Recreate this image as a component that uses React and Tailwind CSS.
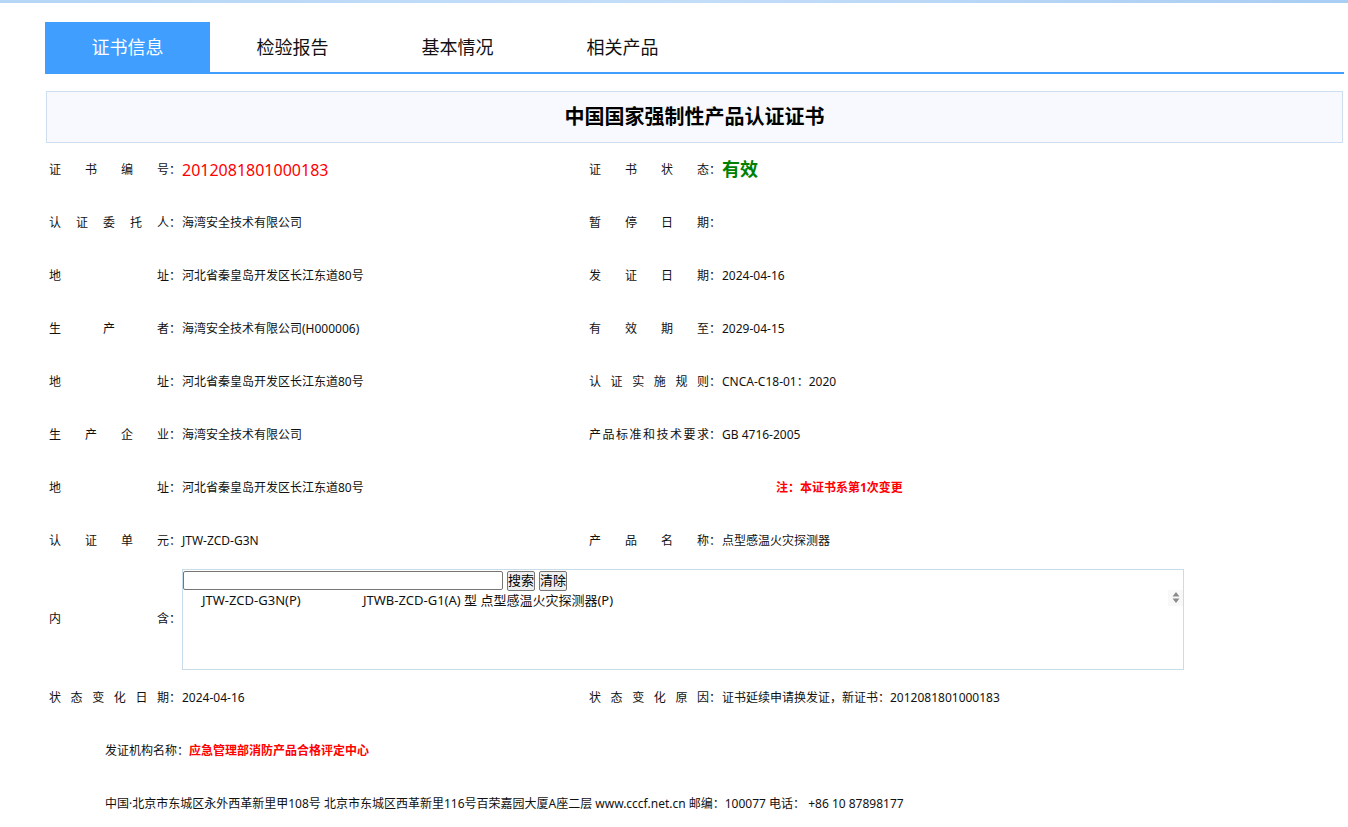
const font = { fontFamily: '"Noto Sans", "Noto Sans CJK SC", sans-serif' }

const Label = ({ text }) => (
    <span className="flex items-center shrink-0">
        <span className="inline-block w-[120px] [text-align-last:justify]">{text}</span>
        <span className="w-[13px]">：</span>
    </span>
)

const Cell = ({ label, children }) => (
    <div className="flex items-center">
        <Label text={label} />
        <span>{children}</span>
    </div>
)

const Row = ({ left, right }) => (
    <div className="flex h-[53px] items-center">
        <div className="w-[544px] pl-[4px]">{left}</div>
        <div className="flex-1">{right}</div>
    </div>
)

const tabs = ['证书信息', '检验报告', '基本情况', '相关产品']

const App = () => {
    return (
        <div className="min-h-screen bg-white text-[12px] text-[#111]" style={font}>
            <div className="h-[3px] bg-gradient-to-r from-[#b5d6f6] via-[#c4def8] to-[#a9cdf3]"></div>
            <div className="ml-[45px] w-[1299px] pt-[19px]">
                <div className="flex h-[50px] border-b-2 border-[#409eff] box-content">
                    {tabs.map((t, i) => (
                        <div
                            key={t}
                            className={
                                'w-[165px] flex items-center justify-center text-[18px] ' +
                                (i === 0 ? 'bg-[#409eff] text-white' : 'text-[#111]')
                            }
                        >
                            {t}
                        </div>
                    ))}
                </div>

                <div className="mt-[17px] mx-px h-[52px] border border-[#cddfee] bg-[#f7f9fe] flex items-center justify-center">
                    <h1 className="text-[20px] font-bold text-black">中国国家强制性产品认证证书</h1>
                </div>

                <Row
                    left={<Cell label="证书编号"><span className="text-[16px] text-[#ff0000]">2012081801000183</span></Cell>}
                    right={<Cell label="证书状态"><span className="text-[18px] font-bold text-[#008000]">有效</span></Cell>}
                />
                <Row
                    left={<Cell label="认证委托人">海湾安全技术有限公司</Cell>}
                    right={<Cell label="暂停日期"></Cell>}
                />
                <Row
                    left={<Cell label="地址">河北省秦皇岛开发区长江东道80号</Cell>}
                    right={<Cell label="发证日期">2024-04-16</Cell>}
                />
                <Row
                    left={<Cell label="生产者">海湾安全技术有限公司(H000006)</Cell>}
                    right={<Cell label="有效期至">2029-04-15</Cell>}
                />
                <Row
                    left={<Cell label="地址">河北省秦皇岛开发区长江东道80号</Cell>}
                    right={<Cell label="认证实施规则">CNCA-C18-01：2020</Cell>}
                />
                <Row
                    left={<Cell label="生产企业">海湾安全技术有限公司</Cell>}
                    right={<Cell label="产品标准和技术要求">GB 4716-2005</Cell>}
                />
                <Row
                    left={<Cell label="地址">河北省秦皇岛开发区长江东道80号</Cell>}
                    right={<div className="pl-[187px] font-bold text-[#ff0000]">注：本证书系第1次变更</div>}
                />
                <Row
                    left={<Cell label="认证单元">JTW-ZCD-G3N</Cell>}
                    right={<Cell label="产品名称">点型感温火灾探测器</Cell>}
                />

                <div className="flex h-[104px] items-center pl-[4px]">
                    <Label text="内含" />
                    <div className="h-[101px] w-[1002px] border border-[#c8dcea] relative">
                        <div className="flex items-center gap-[4px] pt-px">
                            <input className="h-[19px] w-[320px] border border-[#767676] rounded-[2px] px-1 outline-none" />
                            <button className="h-[20px] w-[28px] border border-[#767676] rounded-[2px] bg-[#efefef] text-[13px] leading-none text-black">搜索</button>
                            <button className="h-[20px] w-[28px] border border-[#767676] rounded-[2px] bg-[#efefef] text-[13px] leading-none text-black">清除</button>
                        </div>
                        <div className="flex text-[13px] leading-[18px] text-[#111]">
                            <span className="pl-[19px] w-[180px]">JTW-ZCD-G3N(P)</span>
                            <span>JTWB-ZCD-G1(A) 型 点型感温火灾探测器(P)</span>
                        </div>
                        <div className="absolute right-0 top-[20px] w-[15px] h-[16px] bg-[#f8f8f8] flex items-center justify-center">
                            <svg width="8" height="13" viewBox="0 0 8 13">
                                <path d="M4 1 L7.5 5.5 L0.5 5.5 Z" fill="#8a8a8a" />
                                <path d="M0.5 7.5 L7.5 7.5 L4 12 Z" fill="#8a8a8a" />
                            </svg>
                        </div>
                    </div>
                </div>

                <Row
                    left={<Cell label="状态变化日期">2024-04-16</Cell>}
                    right={<Cell label="状态变化原因">证书延续申请换发证，新证书：2012081801000183</Cell>}
                />

                <div className="flex h-[53px] items-center pl-[60px]">
                    <span>发证机构名称：</span>
                    <span className="font-bold text-[#ff0000]">应急管理部消防产品合格评定中心</span>
                </div>
                <div className="flex h-[53px] items-center pl-[60px]">
                    中国·北京市东城区永外西革新里甲108号 北京市东城区西革新里116号百荣嘉园大厦A座二层 www.cccf.net.cn 邮编：100077 电话： +86 10 87898177
                </div>
            </div>
        </div>
    )
}

export default App
